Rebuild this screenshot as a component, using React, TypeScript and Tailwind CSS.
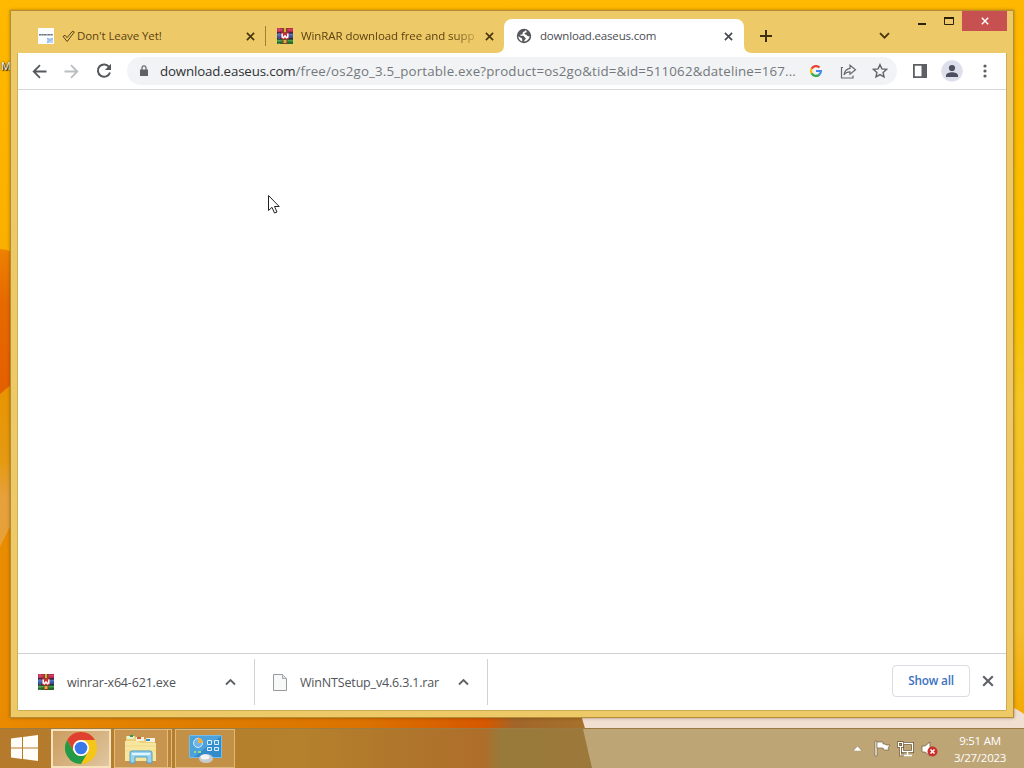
import React from 'react';

const ui = "font-['Open_Sans','Noto_Sans',sans-serif]";

function Wallpaper() {
  return (
    <svg className="absolute inset-0" width="1024" height="768" viewBox="0 0 1024 768">
      <defs>
        <linearGradient id="sky" x1="0" y1="0" x2="0" y2="1">
          <stop offset="0" stopColor="#ffb900" />
          <stop offset="0.15" stopColor="#fdb500" />
          <stop offset="0.33" stopColor="#f9b000" />
          <stop offset="1" stopColor="#f3a900" />
        </linearGradient>
        <linearGradient id="right" x1="0" y1="0" x2="0" y2="1">
          <stop offset="0" stopColor="#ffb700" />
          <stop offset="0.4" stopColor="#f8c000" />
          <stop offset="0.52" stopColor="#f5c524" />
          <stop offset="0.82" stopColor="#f2bc2c" />
          <stop offset="0.93" stopColor="#f4a900" />
        </linearGradient>
        <linearGradient id="petal" x1="0" y1="0" x2="0" y2="1">
          <stop offset="0" stopColor="#ee8200" />
          <stop offset="0.3" stopColor="#e66a00" />
          <stop offset="1" stopColor="#e45c00" />
        </linearGradient>
        <linearGradient id="lower" x1="0" y1="0" x2="0" y2="1">
          <stop offset="0" stopColor="#e89400" />
          <stop offset="0.4" stopColor="#e59a12" />
          <stop offset="0.6" stopColor="#e6a03c" />
          <stop offset="1" stopColor="#eaa236" />
        </linearGradient>
        <linearGradient id="floor" x1="0" y1="0" x2="1" y2="0">
          <stop offset="0" stopColor="#e98a00" />
          <stop offset="0.35" stopColor="#de7c00" />
          <stop offset="0.6" stopColor="#db7300" />
          <stop offset="0.81" stopColor="#d65800" />
          <stop offset="0.86" stopColor="#a0662a" />
          <stop offset="1" stopColor="#a8742a" />
        </linearGradient>
      </defs>
      <path d="M0 0h1024v768H0z" fill="url(#sky)" />
      <path d="M1000 0h24v768h-24z" fill="url(#right)" />
      <path d="M0 249q6 0 12 3v166H0z" fill="url(#petal)" />
      <path d="M0 394l12-10v190H0z" fill="url(#lower)" />
      <path d="M0 547l12-25v246H0z" fill="#e98c00" />
      <path d="M0 711h581l18 57H0z" fill="url(#floor)" />
      <path d="M581 715h433v-7q5 2 10 6v54H597z" fill="#f1dfd2" />
    </svg>
  );
}

function CloseX({ size, className = '' }: { size: number; className?: string }) {
  return (
    <svg width={size} height={size} viewBox="0 0 10 10" className={className} fill="none" stroke="currentColor">
      <path d="M1 1l8 8M9 1L1 9" strokeWidth="1.8" />
    </svg>
  );
}

function WinRarIcon() {
  return (
    <svg width="16" height="16" viewBox="0 0 16 16">
      <path d="M0 0h16v5H0z" fill="#b02a4c" />
      <path d="M0 1h16v1.500H0z" fill="#d8406a" />
      <path d="M0 5h16v6H0z" fill="#34539c" />
      <path d="M0 6h16v1.500H0z" fill="#5378c2" />
      <path d="M0 11h16v5H0z" fill="#216d2e" />
      <path d="M0 12h16v1.500H0z" fill="#49a04a" />
      <path d="M0 4.800h16M0 10.700h16" stroke="#2b1f38" />
      <path d="M2 0v16" stroke="#e6b8c4" strokeWidth=".6" strokeDasharray="1 1.500" />
      <path d="M5.500 0h5v16h-5z" fill="#7d4526" />
      <path d="M7 0h2v4H7zM6.500 12h3v3h-3z" fill="#e0ac3d" />
      <path d="M4 4.500h8V11H4z" fill="#c3323a" />
      <path d="M5.200 5.500v3.300l1.300 1L8 8l1.500 1.800 1.300-1V5.500" fill="none" stroke="#fff" strokeWidth="1.500" />
    </svg>
  );
}

function GlobeIcon() {
  return (
    <svg width="16" height="16" viewBox="0 0 16 16">
      <circle cx="8" cy="8" r="7.2" fill="#54575b" />
      <path
        d="M9.2 2.2c-.2 1.6-1.6 1.3-2.3 2-.6.8.2 1.4-.6 2-.8.5-1.6-.1-2 .8-.2.9 1 .6 2.5.7 2 .2 1.2 1.6 2.4 2 1 .3.5 1.4-.3 2-.6.5-.7 1-.8 1.8 3-.1 5.3-2.4 5.500-5.200-1.400.2-2.400-.3-3-1.200-.5-.9-1.900-.3-2-1.400 0-1 1.600-.8 2.100-1.600.3-.6-.2-1.500-1.500-1.900z"
        fill="#fff"
      />
      <path d="M2.300 8.200l3.800 2.200.2 3C4 12.700 2.400 10.700 2.300 8.200z" fill="#fff" />
    </svg>
  );
}

function Tabs() {
  return (
    <div className={`flex h-[34px] pl-[14px] text-[11.5px] text-[#5c4312] ${ui}`}>
      <div className="relative flex w-[239px] items-center pl-3 pr-2.5">
        <svg width="16" height="16" viewBox="0 0 16 16">
          <path d="M0 0h16v16H0z" fill="#fbfdff" />
          <path d="M1 6.800h14" stroke="#6b7884" strokeWidth="1.600" strokeDasharray="2.500 .3 1.500 .2" />
          <path d="M9 10h6v5H9z" fill="#bcd4f3" />
          <path d="M9 10l3 2.500 3-2.500M9 15l2-2.500" stroke="#6f9fe0" fill="none" strokeWidth=".7" />
        </svg>
        <svg width="13" height="13" viewBox="0 0 13 13" className="ml-2 shrink-0">
          <path d="M1 6.500l2-1.300 2 2.500L10.500 1.200l1.800.8L5.200 11.500z" fill="none" stroke="#5c4312" />
        </svg>
        <span className="ml-0.5 flex-1 whitespace-nowrap tracking-[-0.08px]">Don't Leave Yet!</span>
        <CloseX size={9} className="text-[#473510]" />
        <span className="absolute -right-px top-[7px] h-5 w-px bg-[#a17e38]" />
      </div>
      <div className="flex w-[239px] items-center pl-3 pr-2.5">
        <WinRarIcon />
        <span className="ml-2 whitespace-nowrap tracking-[-0.08px] [mask-image:linear-gradient(to_right,black_88%,rgba(0,0,0,0.3))]">
          WinRAR download free and supp
        </span>
        <CloseX size={9} className="ml-auto text-[#473510]" />
      </div>
      <div className="relative flex w-[240px] items-center rounded-t-lg bg-white pl-3 pr-[11px] text-[#4a4d51]">
        <svg className="absolute bottom-0 left-[-8px]" width="8" height="8"><path d="M8 0v8H0q8 0 8-8z" fill="#fff" /></svg>
        <svg className="absolute bottom-0 right-[-8px]" width="8" height="8"><path d="M0 0v8h8q-8 0-8-8z" fill="#fff" /></svg>
        <GlobeIcon />
        <span className="ml-2 flex-1 whitespace-nowrap tracking-[-0.18px]">download.easeus.com</span>
        <CloseX size={9} className="text-[#45484c]" />
      </div>
      <svg className="ml-4 mt-[11px]" width="12" height="12" viewBox="0 0 12 12" stroke="#3f2f0c" strokeWidth="2">
        <path d="M6 0v12M0 6h12" />
      </svg>
      <svg className="ml-[107px] mt-[13px]" width="11" height="8" viewBox="0 0 11 8" fill="none" stroke="#4a370f" strokeWidth="1.900">
        <path d="M1 1.200l4.500 4.500L10 1.200" />
      </svg>
    </div>
  );
}

function Toolbar() {
  return (
    <div className="flex h-[37px] items-center border-b border-[#d5d7da] bg-white text-[#5f6368]">
      <div className="flex w-[109px] items-center gap-[17px] pl-[14px]">
        <svg width="15" height="15" viewBox="0 0 15 15" fill="none" stroke="#55585c" strokeWidth="1.800" className="shrink-0">
          <path d="M14.500 7.500H2M8 1.200L1.700 7.500 8 13.800" />
        </svg>
        <svg width="15" height="15" viewBox="0 0 15 15" fill="none" stroke="#bbbec1" strokeWidth="1.800" className="shrink-0">
          <path d="M.5 7.500H13M7 1.200l6.300 6.300L7 13.800" />
        </svg>
        <svg width="16" height="16" viewBox="0 0 16 16" fill="none" stroke="#55585c" strokeWidth="2" className="shrink-0">
          <path d="M13.300 4.200A6.200 6.200 0 1 0 14 9.500" />
          <path d="M15 .8V7H8.800z" fill="#55585c" stroke="none" />
        </svg>
      </div>
      <div className="flex h-7 w-[770px] items-center rounded-full bg-[#f1f3f4] pl-3">
        <svg width="10" height="12" viewBox="0 0 10 12">
          <path d="M1 4.500h8V11H1z" fill="#5f6368" />
          <path d="M3 5V2.900a2 2 0 0 1 4 0V5" fill="none" stroke="#5f6368" strokeWidth="1.200" />
        </svg>
        <span className={`ml-[11px] mt-0.5 w-[645px] whitespace-nowrap text-[13.300px] tracking-[0.17px] text-[#74787c] ${ui}`}>
          <span className="tracking-[-0.15px] text-[#303236]">download.easeus.com</span>
          /free/os2go_3.5_portable.exe?product=os2go&amp;tid=&amp;id=511062&amp;dateline=167...
        </span>
        <svg width="12" height="12" viewBox="0 0 12 12" fill="none" strokeWidth="2.200" className="ml-[5px] shrink-0">
          <path d="M9.500 2.600A4.900 4.900 0 0 0 1.600 3.800" stroke="#ea4335" />
          <path d="M1.600 3.800a4.900 4.900 0 0 0 0 4.400" stroke="#fbbc05" />
          <path d="M1.600 8.200A4.900 4.900 0 0 0 9.300 9.600" stroke="#34a853" />
          <path d="M9.300 9.600A4.900 4.900 0 0 0 10.900 6H6" stroke="#4285f4" />
        </svg>
        <svg width="17" height="15" viewBox="0 0 17 15" fill="none" stroke="#65696e" strokeWidth="1.200" className="ml-[18px] shrink-0">
          <path d="M3 3.500H1.500V14H13v-2.500" />
          <path d="M10 1.200l5.500 4.600-5.500 4.500V7.800C7 7.800 5.200 8.800 4 11c.4-3.700 2.300-6 6-6.600z" />
        </svg>
        <svg width="16" height="16" viewBox="0 0 16 16" fill="none" stroke="#5f6368" strokeWidth="1.400" className="ml-[15px] shrink-0">
          <path d="M8 1.700l1.900 4.200 4.600.5-3.400 3 .9 4.500-4-2.300-4 2.300.9-4.500-3.400-3 4.600-.5z" />
        </svg>
      </div>
      <svg width="14" height="14" viewBox="0 0 14 14" className="ml-4">
        <path d="M.9.9h12.200v12.200H.9z" fill="none" stroke="#5c6064" strokeWidth="1.800" />
        <path d="M8.500 0H14v14H8.500z" fill="#5c6064" />
      </svg>
      <svg width="22" height="22" viewBox="0 0 22 22" className="ml-[14px]">
        <circle cx="11" cy="11" r="10.700" fill="#dde0ea" />
        <circle cx="11" cy="8" r="3.100" fill="#4c505f" />
        <path d="M5 17v-1.500c0-2.300 3.500-3.300 6-3.300s6 1 6 3.300V17z" fill="#4c505f" />
      </svg>
      <svg width="4" height="14" viewBox="0 0 4 14" fill="#5c6064" className="ml-5">
        <circle cx="2" cy="2" r="1.600" /><circle cx="2" cy="7" r="1.600" /><circle cx="2" cy="12" r="1.600" />
      </svg>
    </div>
  );
}

function ChevronUp() {
  return (
    <svg width="11" height="8" viewBox="0 0 11 8" fill="none" stroke="#5f6368" strokeWidth="1.900">
      <path d="M1 6.500L5.500 2 10 6.500" />
    </svg>
  );
}

function Downloads() {
  return (
    <div className={`flex h-[57px] items-center border-t border-[#cfd1d4] text-[12.500px] tracking-[-0.17px] text-[#515458] ${ui}`}>
      <div className="flex h-[46px] w-[237px] items-center border-r border-[#d0d2d5] pl-5 pr-[18px]">
        <WinRarIcon />
        <span className="ml-[13px] mt-0.5 flex-1 whitespace-nowrap">winrar-x64-621.exe</span>
        <ChevronUp />
      </div>
      <div className="flex h-[46px] w-[233px] items-center border-r border-[#d0d2d5] pl-[18px] pr-[18px]">
        <svg width="14" height="17" viewBox="0 0 14 17">
          <path d="M.5.500h9l4 4v12H.500z" fill="#f7f8f8" stroke="#96989b" />
          <path d="M9.500.500v4h4" fill="#dcdfe2" stroke="#96989b" strokeWidth=".8" />
        </svg>
        <span className="ml-[13px] mt-0.5 flex-1 whitespace-nowrap">WinNTSetup_v4.6.3.1.rar</span>
        <ChevronUp />
      </div>
      <div className="mb-0.5 ml-auto mr-3 flex items-center gap-3">
        <button className="h-8 w-[78px] whitespace-nowrap rounded border border-[#d9dce0] text-[11.800px] font-semibold tracking-[-0.2px] text-[#3b72c4]">
          Show all
        </button>
        <CloseX size={12} className="text-[#5f6368]" />
      </div>
    </div>
  );
}

function BrowserWindow() {
  return (
    <div className="relative flex h-[708px] w-[1004px] flex-col border border-[#b58d36] bg-[#eec968] px-[7px] pb-[7px] shadow-[0_0_3px_rgba(70,40,0,0.45)]">
      <div className="-ml-1.5 h-[42px] pt-2">
        <Tabs />
      </div>
      <div className="flex flex-1 flex-col bg-white shadow-[-1px_0_#b6a04b99,1px_0_#b6964b99,0_1px_#b6964b99]">
        <Toolbar />
        <div className="flex-1" />
        <Downloads />
      </div>
      <div className="absolute right-1.5 top-0 flex h-5">
        <svg width="40" height="20" viewBox="0 0 40 20" className="mr-[4px]">
          <path d="M0 12h8v2H0z" fill="#2c210b" />
          <path d="M26.500 6.500h9v7h-9z" fill="none" stroke="#2c210b" />
          <path d="M26 6h10v2H26z" fill="#2c210b" />
        </svg>
        <div className="flex w-[45px] items-center justify-center bg-[#c75050] text-white">
          <CloseX size={8} />
        </div>
      </div>
    </div>
  );
}

function ChromeIcon() {
  return (
    <svg width="32" height="32" viewBox="0 0 32 32">
      <circle cx="16" cy="16" r="16" fill="#f5c518" />
      <path d="M2.140 8A16 16 0 0 1 29.860 8H16a8 8 0 0 0-6.930 12z" fill="#df4030" />
      <path d="M2.140 8A16 16 0 0 0 16 32l6.930-12A8 8 0 0 1 9.070 20z" fill="#239a48" />
      <circle cx="16" cy="16" r="8" fill="#fff" />
      <circle cx="16" cy="16" r="6.300" fill="#3978e8" />
    </svg>
  );
}

function ExplorerIcon() {
  return (
    <svg width="32" height="30" viewBox="0 0 32 30">
      <path d="M1 2h9l2 3h18v22H1z" fill="#eccf78" />
      <path d="M2 2h7v3H2z" fill="#e4f0d0" />
      <path d="M11 3h8v4h-8zM21 4h9v4h-9z" fill="#f5f1df" />
      <path d="M5 1h3v2H5z" fill="#2f9b4c" /><path d="M12 3h4v2h-4z" fill="#d05b34" /><path d="M21 5h4v2h-4z" fill="#3a89c9" />
      <path d="M0 7h13l3 2h15v18H0z" fill="#f7e69d" />
      <path d="M1 12h30M1 17h30" stroke="#efd984" />
      <path d="M5 29V19q0-2 2-2h18q2 0 2 2v10h-5v-6H10v6z" fill="#9bd3ee" stroke="#4f9fc7" />
      <path d="M7 20h18" stroke="#e1f6ff" strokeWidth="2" />
    </svg>
  );
}

function ControlPanelIcon() {
  return (
    <svg width="33" height="29" viewBox="0 0 33 29">
      <path d="M.5 1.500h32v22H.5z" fill="#328bca" stroke="#75bde8" />
      <path d="M1 2h31L5 23H1z" fill="#4ba2dc" />
      <circle cx="9" cy="9" r="4.500" fill="#70b6e5" stroke="#d5edfb" />
      <path d="M9 9V3.500A5.500 5.500 0 0 1 14 9z" fill="#f3ae4a" />
      <path d="M18.500 6.500h4v4h-4zM25.500 6.500h4v4h-4zM18.500 13.500h4v3h-4zM25.500 13.500h4v3h-4z" fill="#3f95d0" stroke="#dceffb" />
      <path d="M5 18h2M9 18h3" stroke="#9bda80" strokeWidth="2" />
      <ellipse cx="17" cy="24.500" rx="7" ry="4.500" fill="#c7cbd0" />
      <ellipse cx="16" cy="23" rx="4.500" ry="2.500" fill="#f2f4f5" />
    </svg>
  );
}

function Taskbar() {
  return (
    <div className="relative mt-[10px] flex h-10 border-t border-[#9b7b42] bg-[linear-gradient(to_right,#b57a2c_0px,#b5812c_300px,#b0762c_400px,#ae6e2a_485px,#987a3b_500px,#9c793a_580px,transparent_580px)]">
      <svg className="absolute left-[580px] top-0" width="444" height="39">
        <path d="M0 0h444v39H0z" fill="#bea576" />
        <path d="M0 0h3l9 39H0z" fill="#9c793a" />
      </svg>
      <div className="relative flex w-full">
        <svg width="27" height="26" viewBox="0 0 27 26" fill="#fffdf8" className="ml-[11px] mt-[6px]">
          <path d="M0 3.500l11-1.500v10.500H0zM12 1.900L27 0v12.500H12zM0 13.500h11V24L0 22.500zM12 13.500h15V26l-15-1.900z" />
        </svg>
        <div className="ml-[13px] flex w-[60px] items-center justify-center border-2 border-[#f6e3bd] bg-[linear-gradient(135deg,#cb9c5e,#e0c6a0)] pb-0.5">
          <ChromeIcon />
        </div>
        <div className="ml-[3px] flex w-[54px] items-center justify-center border border-[#e3bd80] bg-[#c79550]">
          <ExplorerIcon />
        </div>
        <div className="w-1 border-y border-r border-[#e3bd80] bg-[#b98438]" />
        <div className="ml-[3px] flex w-[60px] items-center justify-center border border-[#dfb87c] bg-[#c39047]">
          <ControlPanelIcon />
        </div>
        <div className="ml-auto flex items-center pr-[17px]">
          <svg width="9" height="5" viewBox="0 0 9 5" className="mr-[12px]"><path d="M0 5l4.500-5L9 5z" fill="#fff" stroke="#77613c" strokeWidth=".4" /></svg>
          <svg width="17" height="17" viewBox="0 0 17 17" className="mr-[6px]" stroke="#68532f" strokeWidth=".6">
            <path d="M1 1h2v15H1z" fill="#fff" />
            <path d="M3 2h6v2h2l1 1h4l-2 3 1 2h-5l-1-2H3z" fill="#fff" />
          </svg>
          <svg width="17" height="16" viewBox="0 0 17 16" className="mr-[7px]" fill="none">
            <path d="M5.500 2.500h10v8h-10z" stroke="#67522e" strokeWidth="3" />
            <path d="M5.500 2.500h10v8h-10zM10.500 11v3M6 14.500h9" stroke="#fff" strokeWidth="1.400" />
            <path d="M1.500 1.500h4v4h-4zM3.500 6v8H7" stroke="#67522e" strokeWidth="2.400" />
            <path d="M1.500 1.500h4v4h-4zM3.500 6v8H7" stroke="#fff" strokeWidth="1.200" />
          </svg>
          <svg width="17" height="16" viewBox="0 0 17 16" className="mr-[15px]">
            <path d="M1 5h3l5-4v14l-5-4H1z" fill="#fff" stroke="#69542f" strokeWidth=".7" />
            <circle cx="11.500" cy="10.500" r="5" fill="#cb2f2c" />
            <path d="M9.500 8.500l4 4M13.500 8.500l-4 4" stroke="#fff" strokeWidth="1.500" />
          </svg>
          <div className={`w-[54px] text-center text-[11.500px] leading-[17px] tracking-[-0.25px] text-white whitespace-nowrap ${ui}`}>
            <div>9:51 AM</div>
            <div className="-ml-1 -mr-1">3/27/2023</div>
          </div>
        </div>
      </div>
    </div>
  );
}

export default function App() {
  return (
    <div className="relative h-[768px] w-[1024px] overflow-hidden">
      <Wallpaper />
      <span className="absolute left-px top-[58px] font-['Open_Sans',sans-serif] text-[11px] text-white [text-shadow:0_0_2px_black,1px_1px_1px_black]">
        M
      </span>
      <div className="relative pl-[10px] pt-[10px]">
        <BrowserWindow />
      </div>
      <Taskbar />
      <svg className="absolute left-[267px] top-[194px]" width="14" height="21" viewBox="0 0 14 21">
        <path d="M1.500 1.500v15l3.500-3.200 2.500 5.700 2.500-1-2.500-5.500h4.700z" fill="#fff" stroke="#222" />
      </svg>
    </div>
  );
}
